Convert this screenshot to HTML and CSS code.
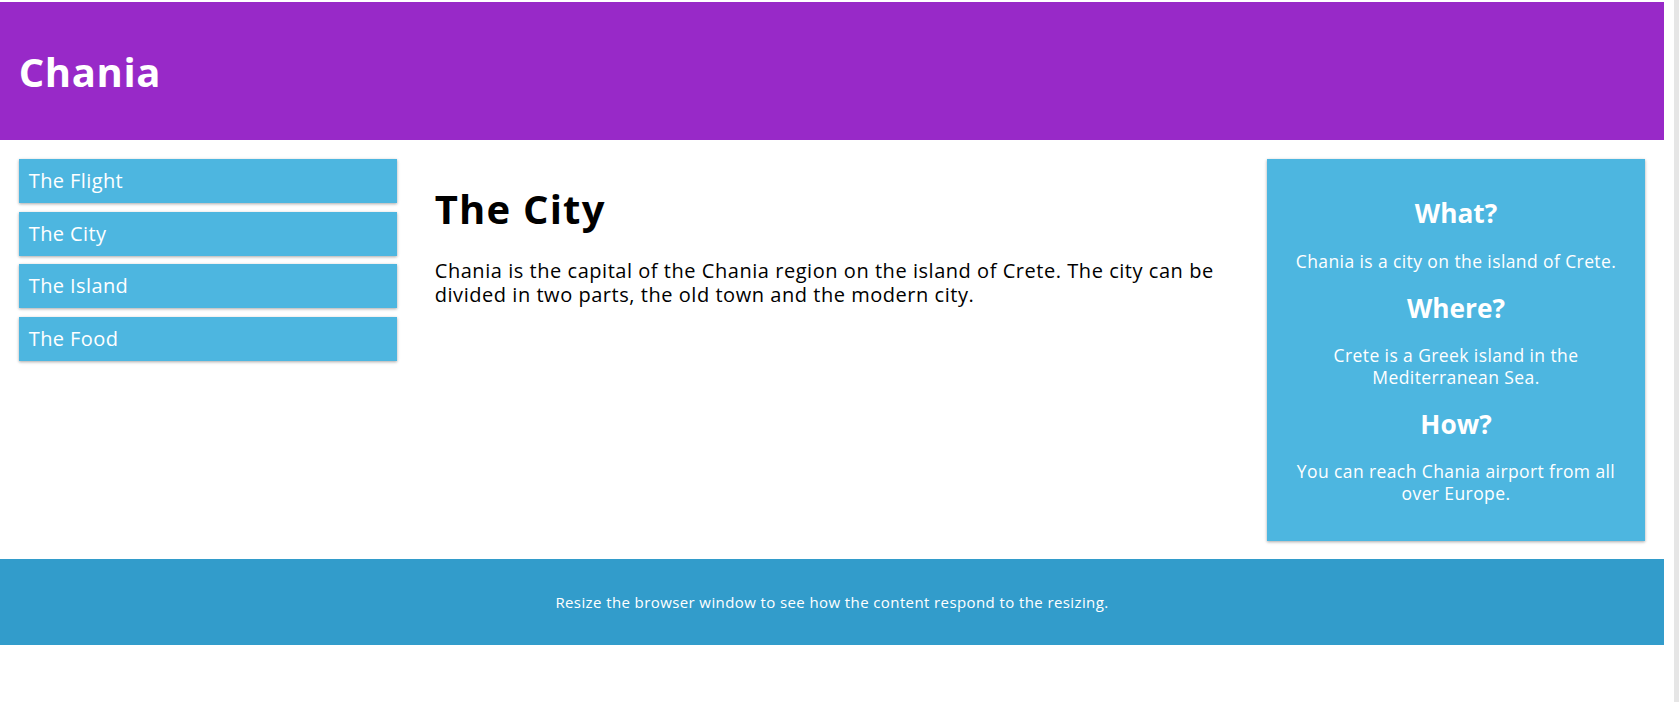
FILE: index.html
```html
<!DOCTYPE html>
<html lang="en">
<head>
<meta charset="utf-8">
<title>Chania</title>
<link rel="stylesheet" href="styles.css">
</head>
<body>
<div class="page">
  <div class="header">
    <h1>Chania</h1>
  </div>
  <div class="row">
    <div class="col menu">
      <ul>
        <li>The Flight</li>
        <li>The City</li>
        <li>The Island</li>
        <li>The Food</li>
      </ul>
    </div>
    <div class="col main">
      <h1>The City</h1>
      <p>Chania is the capital of the Chania region on the island of Crete. The city can be divided in two parts, the old town and the modern city.</p>
    </div>
    <div class="col side">
      <div class="aside">
        <h2>What?</h2>
        <p>Chania is a city on the island of Crete.</p>
        <h2>Where?</h2>
        <p>Crete is a Greek island in the Mediterranean Sea.</p>
        <h2>How?</h2>
        <p>You can reach Chania airport from all over Europe.</p>
      </div>
    </div>
  </div>
  <div class="footer">
    <p>Resize the browser window to see how the content respond to the resizing.</p>
  </div>
</div>
<div class="edge"></div>
</body>
</html>
```

FILE: styles.css
```css
* { box-sizing: border-box; }

html, body { margin: 0; padding: 0; background: #fff; }

body {
  display: flex;
  min-height: 100vh;
  font-family: "Open Sans", "DejaVu Sans", sans-serif;
  color: #000;
  letter-spacing: 0.025em;
}

.page {
  width: 1664px;
  padding-top: 2px;
}

.edge {
  margin-left: auto;
  width: 5px;
  background: #e6e6e6;
}

.header {
  background: #9829c8;
  color: #fff;
  padding: 18.75px;
}

.header h1 {
  margin: 26.8px 0;
  font-size: 40px;
  line-height: 47px;
  font-weight: 700;
  letter-spacing: 0.015em;
}

.row {
  display: grid;
  grid-template-columns: 1fr 2fr 1fr;
  align-items: start;
}

.col { padding: 18.75px; }

.menu ul {
  list-style: none;
  margin: 0;
  padding: 0;
}

.menu li {
  padding: 10px;
  margin-bottom: 8.75px;
  background: #4db6e0;
  color: #fff;
  font-size: 20px;
  line-height: 24px;
  box-shadow: 0 1.25px 3.75px rgba(0,0,0,0.12), 0 1.25px 2.5px rgba(0,0,0,0.24);
}

.main h1 {
  margin: 27px 0 26.8px;
  font-size: 40px;
  line-height: 46px;
  font-weight: 700;
  letter-spacing: 0.03em;
}

.main p {
  margin: 20px 0;
  font-size: 20px;
  line-height: 24px;
  letter-spacing: 0.027em;
}

.aside {
  background: #4db6e0;
  color: #fff;
  text-align: center;
  padding: 18.75px;
  font-size: 17.5px;
  line-height: 21.5px;
  box-shadow: 0 1.25px 3.75px rgba(0,0,0,0.12), 0 1.25px 2.5px rgba(0,0,0,0.24);
}

.aside h2 {
  margin: 21.8px 0;
  font-size: 26.25px;
  line-height: 29.5px;
  font-weight: 700;
  letter-spacing: 0;
}

.aside p { margin: 17.5px 0; }

.footer {
  background: #329ccb;
  color: #fff;
  text-align: center;
  font-size: 15px;
  line-height: 18.5px;
  padding: 18.75px;
}

.footer p { margin: 15px 0; }
```
